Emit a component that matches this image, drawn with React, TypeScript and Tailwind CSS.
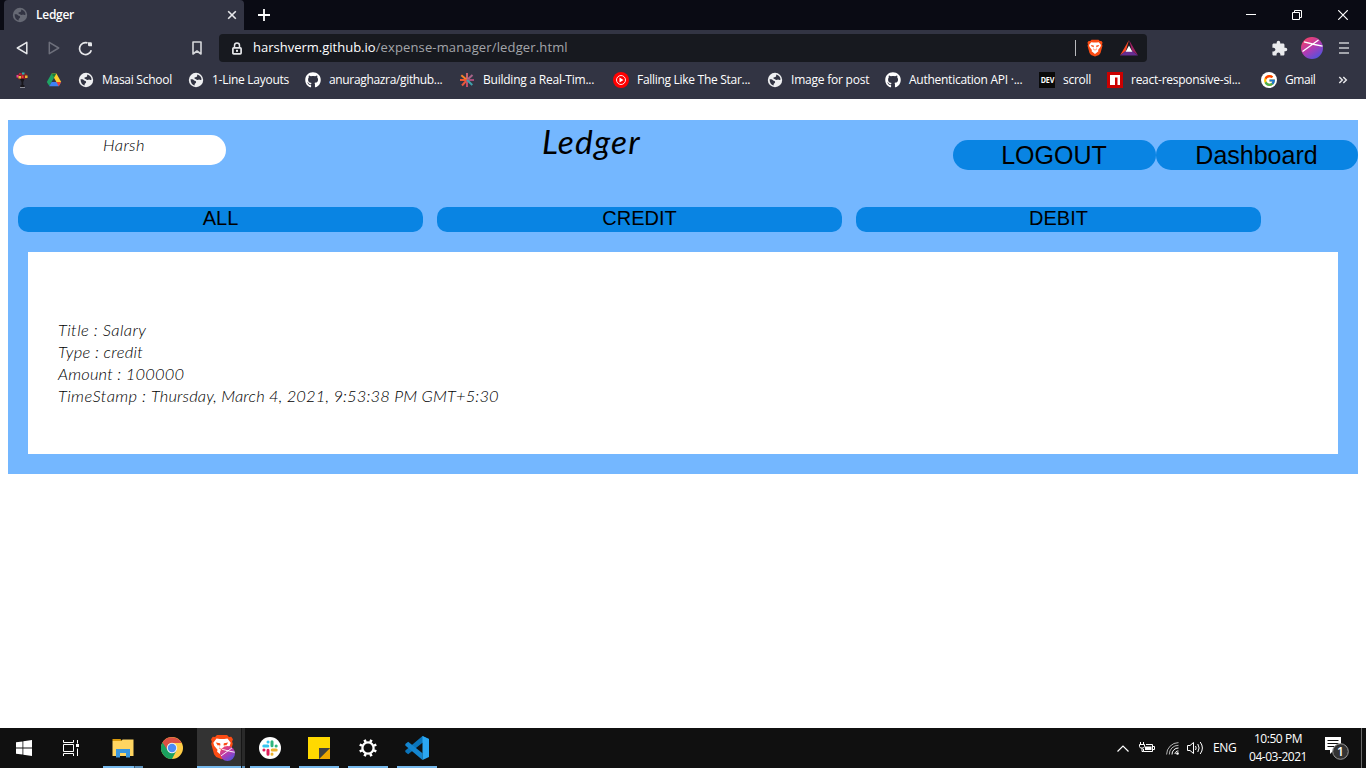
import React from "react";
import { FaGithub } from "react-icons/fa";
import { FcGoogle } from "react-icons/fc";
import { MdExtension } from "react-icons/md";

const ui = "font-['Open_Sans','Noto_Sans',sans-serif]";

function Globe({ tone = "#eeeff1", hole = "#323443" }: { tone?: string; hole?: string }) {
  return (
    <svg width="16" height="16" viewBox="0 0 16 16">
      <circle cx="8" cy="8" r="7.2" fill={tone} />
      <path d="M2.6 7.2C4.3 7 5.6 7.4 6.1 8.5c1 .1 1.900.5 2 1.400.1.9-.8 1.300-1.300 1.800l-.3 1.900C4.200 13 2.500 10.500 2.600 7.200Z" fill={hole} />
      <path d="M9.300 2.500c2.400.5 4.200 2.600 4.300 5.100-.9.8-1.600.5-2.200-.2-.8-.1-1.500.6-2.400.5-.9-.2-1.200-.9-2.100-1.100-.7-.3-.5-1.200.1-1.500.9-.4 1.700-.2 2-.9Z" fill={hole} />
    </svg>
  );
}

function Lion({ size }: { size: number }) {
  return (
    <svg width={size} height={size} viewBox="0 0 18 18">
      <path d="M5.500.7h7l1.300 1.300 1.600-.1 1.200 1.800-.6 1.600.5 1.500-2 7.300-1.500 1.800L9 17.500 5 15.900l-1.500-1.800L1.500 6.800 2 5.300l-.6-1.600L2.600 1.900l1.600.1Z" fill="#fb4c14" />
      <path d="M5.200 3.200 7.500 3.500h3l2.300-.3 2.200 2.900-.6 2-2.300 2.800.3 1.400L9 15l-3.400-2.700.3-1.400L3.600 8.100 3 6.100Z" fill="#fff" />
      <path d="m4.700 5.900 3 .5.2 1-.7 2.200L9 10.900l1.800-1.300-.7-2.200.2-1 3-.5-1.400 2-.9-.3-.5.6.5 1.700-2 1.500-2-1.500.5-1.700-.5-.6-.9.3Z" fill="#fb4c14" />
    </svg>
  );
}

function Orb({ size, id }: { size: number; id: string }) {
  return (
    <svg width={size} height={size} viewBox="0 0 22 22">
      <defs>
        <linearGradient id={id} x1="0.15" y1="0.1" x2="0.75" y2="1">
          <stop offset="0" stopColor="#f0416c" />
          <stop offset="0.5" stopColor="#b03bb4" />
          <stop offset="1" stopColor="#4c54e0" />
        </linearGradient>
      </defs>
      <circle cx="11" cy="11" r="11" fill={`url(#${id})`} />
      <path d="M1.500 14.500 17.500 3M3 4.800l10.500 2.700 8 1.700" stroke="#fff" strokeWidth="1.300" fill="none" />
    </svg>
  );
}

const Drive = () => (
  <svg width="16" height="16" viewBox="0 0 16 16">
    <path d="M5.600 1.500h4.800L15.200 10h-4.800Z" fill="#ffcf2d" />
    <path d="M5.600 1.500 8 5.800 3.300 14 .8 10Z" fill="#1fa463" />
    <path d="M5.600 1.500h4.800L8 5.800Z" fill="#188038" />
    <path d="M5.600 10h9.600l-2.400 4.200H3.200Z" fill="#3f82f4" />
    <path d="M12.800 14.200 10.400 10h4.800Z" fill="#ea4335" />
  </svg>
);

const Bouquet = () => (
  <svg width="16" height="16" viewBox="0 0 16 16">
    <path d="M3.500 2.500 6 1h5l2.500 2v3L11 7.500H5L2.500 5.500Z" fill="#7c2029" />
    <rect x="2.500" y="3" width="2" height="2.500" fill="#e83e9b" />
    <rect x="4.500" y="4" width="2.500" height="2.500" fill="#e7c43b" />
    <rect x="5" y="1" width="2.500" height="2" fill="#b02440" />
    <rect x="8" y="0.500" width="2.500" height="2" fill="#28b6b0" />
    <rect x="11" y="3.500" width="2.500" height="2.500" fill="#e8b432" />
    <rect x="7.500" y="3.500" width="2" height="2.500" fill="#f33a3a" />
    <path d="M6 7h4.500l-1.200 3v3h1v2H6.500v-2h1v-3Z" fill="#17151a" />
    <path d="M6 15.500h5" stroke="#8b8c95" />
  </svg>
);

const Asterisk = () => (
  <svg width="16" height="16" viewBox="0 0 16 16" strokeWidth="2">
    <path d="M8 8V1" stroke="#c9606a" />
    <path d="M8 8 2.300 3.200" stroke="#f5822a" />
    <path d="m8 8 5.500-5" stroke="#a9648a" />
    <path d="M8 8H1" stroke="#f0562e" />
    <path d="M8 8h7" stroke="#a34c78" />
    <path d="m8 8-5 5.500" stroke="#e9583d" />
    <path d="M8 8v7" stroke="#c24c66" />
    <path d="m8 8 5.300 5" stroke="#3fa0ac" />
  </svg>
);

const Music = () => (
  <svg width="16" height="16" viewBox="0 0 16 16">
    <circle cx="8" cy="8" r="8" fill="#f00" />
    <circle cx="8" cy="8" r="4.500" fill="none" stroke="#fff" strokeWidth="0.900" />
    <path d="m6.500 5.500 4 2.500-4 2.500Z" fill="#fff" />
  </svg>
);

const Dev = () => (
  <span className="flex h-4 w-4 items-center justify-center overflow-hidden bg-[#0a0a0a]">
    <span className="scale-x-[0.8] text-[9px] font-bold leading-4 tracking-[-0.2px] text-white">DEV</span>
  </span>
);

const Npm = () => (
  <svg width="16" height="16" viewBox="0 0 16 16">
    <rect width="16" height="16" fill="#cb0000" />
    <path d="M3 3h10v10h-2.500V5.500H8V13H3Z" fill="#fff" />
  </svg>
);

const Gmark = () => (
  <span className="flex size-4 items-center justify-center rounded-full bg-white">
    <FcGoogle size={13} />
  </span>
);

const Hub = () => <FaGithub size={16} color="#fff" />;

const bookmarks = [
  { w: "w-8", icon: <Bouquet />, text: "", track: "" },
  { w: "w-8", icon: <Drive />, text: "", track: "" },
  { w: "w-[110px]", icon: <Globe />, text: "Masai School", track: "tracking-[-0.27px]" },
  { w: "w-[117px]", icon: <Globe />, text: "1-Line Layouts", track: "tracking-[-0.27px]" },
  { w: "w-[154px]", icon: <Hub />, text: "anuraghazra/github...", track: "tracking-[-0.34px]" },
  { w: "w-[154px]", icon: <Asterisk />, text: "Building a Real-Tim...", track: "tracking-[-0.23px]" },
  { w: "w-[154px]", icon: <Music />, text: "Falling Like The Star...", track: "tracking-[-0.29px]" },
  { w: "w-[118px]", icon: <Globe />, text: "Image for post", track: "tracking-[-0.22px]" },
  { w: "w-[154px]", icon: <Hub />, text: "Authentication API ·...", track: "tracking-[-0.26px]" },
  { w: "w-[68px]", icon: <Dev />, text: "scroll", track: "tracking-[-0.25px]" },
  { w: "w-[154px]", icon: <Npm />, text: "react-responsive-si...", track: "tracking-[-0.26px]" },
  { w: "w-[76px]", icon: <Gmark />, text: "Gmail", track: "tracking-[-0.45px]" },
];

function TabStrip() {
  return (
    <div className="flex h-[30px] items-stretch bg-[#0a0b14] pl-1">
      <div className="flex w-60 items-center rounded-t bg-[#323443] pl-2 pr-[7px]">
        <Globe tone="#666974" />
        <span className="ml-2 text-xs font-semibold tracking-[-0.28px]">Ledger</span>
        <svg className="ml-auto" width="10" height="10" viewBox="0 0 10 10">
          <path d="m1.200 1.200 7.600 7.600M8.800 1.200 1.200 8.800" stroke="#e8e9ec" strokeWidth="1.600" />
        </svg>
      </div>
      <svg className="ml-[14px] self-center" width="12" height="12" viewBox="0 0 12 12">
        <path d="M6 0v12M0 6h12" stroke="#fff" strokeWidth="1.800" />
      </svg>
      <div className="ml-auto flex items-center gap-9 pr-[18px]">
        <svg width="10" height="10" viewBox="0 0 10 10">
          <path d="M0 4.500h10" stroke="#fff" />
        </svg>
        <svg width="10" height="10" viewBox="0 0 10 10" fill="none" stroke="#fff">
          <path d="M.5 2.500h7v7h-7ZM2.500 2V.5h7v7H8" />
        </svg>
        <svg width="10" height="10" viewBox="0 0 10 10">
          <path d="m.2.2 9.600 9.600M9.800.2.2 9.800" stroke="#fff" strokeWidth="1.200" />
        </svg>
      </div>
    </div>
  );
}

function Toolbar() {
  return (
    <div className="flex h-9 items-center">
      <svg className="ml-4" width="12" height="14" viewBox="0 0 12 14">
        <path d="M10.800 1.300v11.400L1.300 7Z" fill="none" stroke="#e6e7ea" strokeWidth="1.500" strokeLinejoin="round" />
      </svg>
      <svg className="ml-5" width="12" height="14" viewBox="0 0 12 14">
        <path d="M1.300 1.300v11.400L10.700 7Z" fill="none" stroke="#6d6f7b" strokeWidth="1.500" strokeLinejoin="round" />
      </svg>
      <svg className="ml-[18px]" width="15" height="15" viewBox="0 0 15 15">
        <path d="M9.500 1.900A6 6 0 1 0 13.300 9.200" fill="none" stroke="#e6e7ea" strokeWidth="1.700" />
        <path d="M10 1.300h2.700a1.300 1.300 0 0 1 1.300 1.300v2.700H11.200q-1.200 0-1.200-1.200Z" fill="#e6e7ea" />
      </svg>
      <svg className="ml-[98px]" width="12" height="14" viewBox="0 0 12 14">
        <path d="M2 1h8v12L6 10l-4 3Z" fill="none" stroke="#d5d6da" strokeWidth="1.600" strokeLinejoin="round" />
      </svg>
      <div className="ml-4 flex h-7 w-[928px] items-center rounded bg-[#17191f] pl-[13px] pr-[9px]">
        <svg width="10" height="13" viewBox="0 0 10 13">
          <path d="M2.500 6V3.400a2.500 2.500 0 0 1 5 0V6" fill="none" stroke="#e6e7ea" strokeWidth="1.500" />
          <rect x="0.900" y="5.900" width="8.200" height="5.900" rx="0.800" fill="none" stroke="#e6e7ea" strokeWidth="1.700" />
          <rect x="4" y="7.800" width="2" height="2" fill="#e6e7ea" />
        </svg>
        <span className="ml-[11px] text-[13px] text-white">harshverm.github.io</span>
        <span className="text-[13px] tracking-[0.14px] text-[#a3a5aa]">/expense-manager/ledger.html</span>
        <span className="ml-auto h-4 w-px bg-[#b9babd]" />
        <span className="ml-[10px]">
          <Lion size={18} />
        </span>
        <svg className="ml-4" width="18" height="16" viewBox="0 0 18 16">
          <path d="M9 0 5.900 10.700 0 15.500Z" fill="#ff4724" />
          <path d="m9 0 9 15.500-5.900-4.800Z" fill="#9e1f63" />
          <path d="M0 15.500h18l-5.900-4.800H5.900Z" fill="#662d91" />
          <path d="m9 5.500 3.400 6.200H5.600Z" fill="#fff" />
        </svg>
      </div>
      <span className="ml-[124px]">
        <MdExtension size={17} color="#e9eaed" />
      </span>
      <span className="ml-[13px]">
        <Orb size={22} id="orb-toolbar" />
      </span>
      <svg className="ml-4" width="10" height="12" viewBox="0 0 10 12">
        <path d="M0 1h10M0 6h10M0 11h10" stroke="#c9cad0" strokeWidth="1.600" />
      </svg>
    </div>
  );
}

function Bookmarks() {
  return (
    <div className="flex h-[33px] items-center pb-[5px] pl-[14px] text-xs">
      {bookmarks.map((b, i) => (
        <div key={i} className={`flex shrink-0 items-center gap-2 whitespace-nowrap ${b.w}`}>
          {b.icon}
          {b.text && <span className={b.track}>{b.text}</span>}
        </div>
      ))}
      <svg className="ml-px" width="10" height="8" viewBox="0 0 10 8">
        <path d="m1.300 1 3 3-3 3M5.300 1l3 3-3 3" fill="none" stroke="#e6e7ea" strokeWidth="1.500" />
      </svg>
    </div>
  );
}

const Windows = () => (
  <svg width="16" height="16" viewBox="0 0 16 16">
    <path d="M0 2.300 6.500 1.400v6.200H0ZM7.300 1.300 16 0v7.600H7.300ZM0 8.400h6.500v6.200L0 13.700ZM7.300 8.400H16V16l-8.700-1.300Z" fill="#fff" />
  </svg>
);

const TaskView = () => (
  <svg width="17" height="16" viewBox="0 0 17 16" fill="none" stroke="#fff">
    <path d="M.5 0v2.500h10V0M.5 16v-2.500h10V16M.5 4.500h10v7H.5ZM14.500 0v3.500M14.500 8.500V16" />
    <rect x="13.500" y="4.500" width="2" height="2" fill="#fff" />
  </svg>
);

const Explorer = () => (
  <svg width="22" height="20" viewBox="0 0 22 20">
    <path d="M.5 1h8l1.500 2H.5Z" fill="#d99a0c" />
    <path d="M.5 3h9l1-1.500h11V18H.5Z" fill="#ffd561" />
    <path d="M4 19.500V11h14v8.500h-4V15H8v4.500Z" fill="#3a96dd" />
  </svg>
);

const Chrome = () => (
  <svg width="22" height="22" viewBox="0 0 22 22">
    <circle cx="11" cy="11" r="11" fill="#ffcd46" />
    <path d="M11 11 1.470 5.500A11 11 0 0 0 11 22l4.500-8.400Z" fill="#1aa15f" />
    <path d="M1.470 5.500A11 11 0 0 1 20.600 6H11a5 5 0 0 0-4.800 6.500Z" fill="#dc5044" />
    <circle cx="11" cy="11" r="5.200" fill="#f1f1f1" />
    <circle cx="11" cy="11" r="4.200" fill="#4c8bf5" />
  </svg>
);

const Slack = () => (
  <svg width="22" height="22" viewBox="0 0 22 22" strokeWidth="3" strokeLinecap="round">
    <circle cx="11" cy="11" r="11" fill="#fff" />
    <path d="M4.800 9h4M9 4.900h.1" stroke="#36c5f0" />
    <path d="M13 4.800v4M17.100 9h.1" stroke="#2eb67d" />
    <path d="M13.200 13h4M13 17.100v.1" stroke="#ecb22e" />
    <path d="M9 13.200v4M4.900 13h.1" stroke="#e01e5a" />
  </svg>
);

const Notes = () => (
  <svg width="22" height="22" viewBox="0 0 22 22">
    <path d="M0 0h22v11L11 22H0Z" fill="#ffd900" />
    <path d="M11 22 22 11v11Z" fill="#f0a900" />
    <path d="M11 11h11L11 22Z" fill="#41413f" />
  </svg>
);

const Gear = () => (
  <svg width="20" height="20" viewBox="0 0 20 20" fill="none" stroke="#fff">
    <circle cx="10" cy="10" r="5.600" strokeWidth="2.300" />
    <path d="M13.400 1.700 12.400 4.200M18.300 6.600l-2.500 1M18.300 13.400l-2.500-1M13.400 18.300l-1-2.500M6.600 18.300l1-2.500M1.700 13.400l2.500-1M1.700 6.600l2.500 1M6.600 1.700l1 2.500" strokeWidth="2.600" />
  </svg>
);

const Code = () => (
  <svg width="24" height="24" viewBox="0 0 24 24">
    <path d="M17.500 0 24 3v5L17.500 6.800 3.200 18.200.3 16V14.500Z" fill="#0a74ba" />
    <path d="M.3 8 3.200 5.800 17.500 17.200V24L.3 9.500Z" fill="#1485cf" />
    <path d="M17.500 0 24 3v18l-6.500 3Z" fill="#2ba7f3" />
  </svg>
);

function TaskButton({ icon, open }: { icon: React.ReactNode; open?: boolean }) {
  return (
    <div className="flex w-[49px] flex-col items-center">
      <div className="flex h-[38px] items-center pt-0.5">{icon}</div>
      {open && <div className="h-0.5 w-10 bg-[#76b9ed]" />}
    </div>
  );
}

function Taskbar() {
  return (
    <div className="flex h-10 items-stretch bg-[#101010] text-xs text-white">
      <div className="flex w-12 items-center justify-center">
        <Windows />
      </div>
      <div className="flex w-[50px] items-center justify-center pr-[3px]">
        <TaskView />
      </div>
      <div className="flex w-[50px] flex-col items-center">
        <div className="flex h-[38px] items-center pt-0.5">
          <Explorer />
        </div>
        <div className="flex h-0.5 w-10">
          <div className="w-[31px] bg-[#76b9ed]" />
          <div className="w-px bg-[#3a5a75]" />
          <div className="w-2 bg-[#5c8fb8]" />
        </div>
      </div>
      <div className="flex w-[49px] items-center justify-center pr-[2px]">
        <Chrome />
      </div>
      <div className="flex h-10 w-12">
        <div className="flex w-11 flex-col bg-[#333333]">
          <div className="relative flex h-[38px] items-center pl-[12px]">
            <Lion size={26} />
            <span className="absolute left-[23px] top-[18px]">
              <Orb size={15} id="orb-taskbar" />
            </span>
          </div>
          <div className="h-0.5 bg-[#76b9ed]" />
        </div>
        <div className="w-px bg-[#161616]" />
        <div className="flex w-[3px] flex-col bg-[#2a2a2a] pt-[38px]">
          <div className="h-0.5 bg-[#5c8fb8]" />
        </div>
      </div>
      <TaskButton icon={<Slack />} open />
      <TaskButton icon={<Notes />} open />
      <TaskButton icon={<Gear />} open />
      <TaskButton icon={<Code />} open />
      <div className="ml-auto flex items-center">
        <svg width="12" height="7" viewBox="0 0 12 7">
          <path d="m.5 6.500 5.500-5.500 5.500 5.500" fill="none" stroke="#fff" strokeWidth="1.200" />
        </svg>
        <svg className="ml-[10px]" width="16" height="12" viewBox="0 0 16 12" fill="none" stroke="#fff">
          <path d="M1.500 0v2M4.500 0v2M.5 2.500h5v2L4.500 6h-3L.5 4.500ZM3 6v3.500h1.500M7 2.500h6.500v7h-9V7M14 4.500h1.500v3H14" />
          <path d="M6 4.500h6.500v3.500H6Z" fill="#fff" stroke="none" />
        </svg>
        <svg className="ml-[11px]" width="13" height="13" viewBox="0 0 13 13" fill="none" stroke="#fff">
          <path d="M9 12a3 3 0 0 1 3.500-3M6 12.500A6.300 6.300 0 0 1 12.500 6" />
          <path d="M3.300 12.500A9 9 0 0 1 12.500 3.300M.6 12.500A12 12 0 0 1 12.500.6" stroke="#b5b5b5" />
          <circle cx="11.500" cy="11.500" r="1.300" fill="#fff" stroke="none" />
        </svg>
        <svg className="ml-2" width="17" height="14" viewBox="0 0 17 14" fill="none" stroke="#fff">
          <path d="M.5 4.500h2.500L6.500 1.500v11L3 9.500H.5ZM8.500 5q1.300 2 0 4M10.800 3q2.600 4 0 8M13.200 1q4.400 6 0 12" />
        </svg>
        <span className="ml-[9px] w-6 tracking-[-0.4px]">ENG</span>
        <div className="ml-[11px] flex w-[60px] flex-col items-center leading-[18px]">
          <span className="tracking-[-0.46px]">10:50 PM</span>
          <span className="tracking-[-0.46px]">04-03-2021</span>
        </div>
        <div className="relative ml-[17px] h-6 w-[25px]">
          <svg width="25" height="24" viewBox="0 0 25 24">
            <path d="M0 1h16v13h-7L5 18v-4H0Z" fill="#fff" />
            <path d="M2.500 4.500h11M2.500 7.500h11M2.500 10.500h8" stroke="#101010" />
            <circle cx="15.500" cy="15.500" r="7.800" fill="#333" stroke="#999" />
          </svg>
          <span className="absolute left-3 top-2 w-[7px] text-center text-xs font-semibold leading-[15px]">1</span>
        </div>
        <div className="ml-[11px] mr-1 h-10 w-px bg-[#6a6a6a]" />
      </div>
    </div>
  );
}

const filters = ["ALL", "CREDIT", "DEBIT"];

export default function App() {
  return (
    <div className={`flex h-[768px] w-[1366px] flex-col overflow-hidden bg-white ${ui}`}>
      <header className="h-[99px] shrink-0 bg-[#323443] text-white">
        <TabStrip />
        <Toolbar />
        <Bookmarks />
      </header>
      <main className="flex-1 px-2 pt-[21px] font-['Lato',sans-serif] text-black">
        <section className="h-[354px] bg-[#74b7ff]">
          <div className="flex h-[87px] items-start">
            <div className="ml-[5px] mt-[15px] h-[30px] w-[213px] rounded-[15px] bg-white pl-[9px] text-center text-[16.5px] font-light italic leading-5 tracking-[0.4px]">
              Harsh
            </div>
            <h1 className="ml-[316px] w-[110px] whitespace-nowrap text-[33.5px] font-normal italic leading-[42px] tracking-[1.2px]">Ledger</h1>
            <div className="ml-auto mt-5 flex font-['Liberation_Sans',sans-serif] text-[25px] leading-[31px]">
              <button className="h-[30px] w-[203px] rounded-[15px] bg-[#0984e3] pr-px">LOGOUT</button>
              <button className="h-[30px] w-[202px] rounded-[15px] bg-[#0984e3] pr-px">Dashboard</button>
            </div>
          </div>
          <div className="flex gap-[14px] pl-[10px] font-['Liberation_Sans',sans-serif] text-[20px] leading-[23px]">
            {filters.map((f) => (
              <button key={f} className="h-[25px] w-[405px] rounded-[10px] bg-[#0984e3] pb-0.5">
                {f}
              </button>
            ))}
          </div>
          <div className="mx-5 mt-5 h-[202px] bg-white pl-[30px] pt-[67px] text-[16.5px] font-light italic leading-[22px]">
            <p className="tracking-[0.42px]">Title : Salary</p>
            <p className="tracking-[0.28px]">Type : credit</p>
            <p className="tracking-[0.18px]">Amount : 100000</p>
            <p className="tracking-[0.19px]">
              <span className="tracking-[0.42px]">TimeStamp : </span>
              <span className="tracking-[0.13px]">Thursday, March 4, 2021, 9:53:38 PM GMT+5:30</span>
            </p>
          </div>
        </section>
      </main>
      <Taskbar />
    </div>
  );
}
